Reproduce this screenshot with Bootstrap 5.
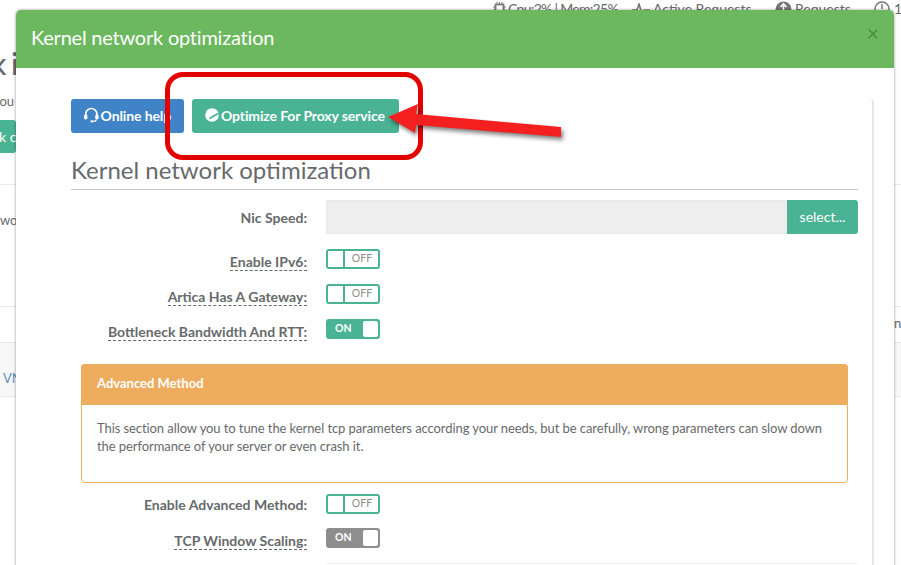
<!DOCTYPE html>
<html lang="en">
<head>
<meta charset="utf-8">
<title>Kernel network optimization</title>
<link rel="stylesheet" href="https://cdn.jsdelivr.net/npm/bootstrap@5.3.0/dist/css/bootstrap.min.css">
<style>
html,body{height:100%;overflow:hidden;background:#fff}
body{font-family:Lato,"Open Sans",sans-serif;font-size:14px;color:#676a6c}
.scene{position:relative;width:901px;height:565px;overflow:hidden}
.statusbar{height:16px;margin-top:1px;padding-left:493px;white-space:nowrap;color:#676a6c;line-height:20px;margin-bottom:-1px}
.statusbar svg{flex:none}
.statusbar>div{flex:none}
.stat1{width:139px;gap:2px}.stat2{width:143px;gap:3px}.stat3{width:99px;gap:3px}
.stat1 span{letter-spacing:-.7px}
.backh{font-size:30px;line-height:36px;margin:29px 0 0 -9px;font-weight:500;color:#676a6c;word-spacing:-3px}
.backp{margin:12px 0 0 -5px;font-size:13px;line-height:16px}
.backb{margin-top:11px;width:16px;height:33px;background:#4ab394;color:#fff;border-radius:0 3px 3px 0;line-height:33px;white-space:nowrap;overflow:hidden;text-indent:-1px}
.backrow{border-top:1px solid #e7eaec;font-size:13px;white-space:nowrap}
.r1{margin-top:31px;height:122px;padding-top:26px}
.r2{height:36px;padding-left:894px;padding-top:7px}
.r3{height:55px;background:#f8f8f8;padding:26px 0 0 3px;border-bottom:1px solid #e7eaec;color:#5b8fc0}
.wnd{position:absolute;left:16px;top:10px;width:878px;height:600px;background:#fff;border-radius:5px 5px 0 0;box-shadow:0 0 3px rgba(0,0,0,.45)}
.wnd-h{height:58px;background:#6cb85f;color:#fff;border-radius:5px 5px 0 0;padding:0 15px}
.wnd-t{font-size:20px;font-weight:400;margin:-4px 0 0;letter-spacing:-.22px}
.wnd-x{font-size:21px;line-height:1;color:#4f8a45;margin-top:-13px;border:0;background:none;padding:0}
.inner{margin:31px 0 0 55px;width:803px;padding-right:14px;border-right:2px solid #e7e7e7;border-top-right-radius:4px;height:520px}
.tbtn{height:34px;border:0;color:#fff;font-size:14px;font-weight:700;letter-spacing:-.12px;border-radius:3px;padding:0 13px 2px;display:flex;align-items:center;gap:2px;white-space:nowrap}
.tb-blue{background:#4083c6;width:113px}
.tb-teal{background:#4ab394;width:207px}
.sech{font-size:24px;font-weight:400;line-height:29px;color:#676a6c;margin:22px 0 0;padding-bottom:5px;border-bottom:1px solid #c9c9c9}
.frow{display:flex;align-items:flex-start;gap:19px;height:20px}
.flab{width:236px;text-align:right;font-weight:700;line-height:17px;flex:none;font-size:14px}
.flab span.dot{border-bottom:1px dashed #676a6c}
.nic{margin-top:10px;height:34px}
.nic .flab{padding-top:9px}
.nicv{flex:1;height:34px;background:#eee;border:1px solid #e9e9e9}
.nicb{width:71px;height:34px;background:#4ab394;color:#fff;border:0;border-radius:0 3px 3px 0;padding:0 0 2px;font-size:14px}
.sw{width:54px;height:20px;border:2px solid #4ab394;border-radius:3px;flex:none;display:flex;font-size:10.5px;font-weight:700;line-height:14px;background:#fff;overflow:hidden}
.sw-off .knob{width:15px;border-right:2px solid #4ab394;flex:none;height:16px;box-sizing:content-box}
.sw-off .lbl{flex:1;text-align:center;color:#8c8c8c;padding-left:1px;font-weight:400;letter-spacing:.1px}
.sw-on{background:#4ab394}
.sw-on .lbl{flex:1;color:#fff;padding-left:7px}
.sw-on .knob{width:15px;height:16px;background:#fff;border-radius:2px;flex:none}
.sw-gray{border-color:#8e8e8e;background:#8e8e8e}
.rowa{margin-top:15px}
.rowa .flab{padding-top:4px}
.rowb .flab{padding-top:2px}
.rowc{margin-top:14px}
.rowc .flab{padding-top:4px}
.orange{margin:25px 10px 0 10px;border:1px solid #eeac5f;border-radius:4px;height:119px}
.orange-h{height:41px;background:#eeac5f;color:#fff;font-weight:700;font-size:13px;padding:0 16px 1px;display:flex;align-items:center;margin:-1px -1px 0;border-radius:4px 4px 0 0}
.orange-b{padding:14px 15px;font-size:13px;line-height:18px;letter-spacing:-.08px}
.rowb{margin-top:11px}
.next{margin:15px 0 0 255px;height:30px;border:1px solid #efefef;border-radius:3px}
.mark-box{position:absolute;left:165px;top:72px;width:258px;height:88px;border:5px solid #e30000;border-radius:18px}
.mark-arrow{position:absolute;left:380px;top:96px;filter:drop-shadow(2px 3px 2px rgba(0,0,0,.5))}
</style>
</head>
<body>
<div class="scene">
  <div class="statusbar d-flex align-items-center">
    <div class="stat1 d-flex align-items-center"><svg width="13" height="14" viewBox="0 0 13 14"><rect x="2.500" y="2.500" width="8" height="9" fill="none" stroke="#777" stroke-width="1.800"/><path d="M4 0v2M6.500 0v2M9 0v2M0 5h2M0 8h2M11 5h2M11 8h2" stroke="#777"/></svg><span>Cpu:2% | Mem:25%</span></div>
    <div class="stat2 d-flex align-items-center"><svg width="18" height="12" viewBox="0 0 18 12"><path d="M0 7h5l2-6 3 10 2-4h6" fill="none" stroke="#777" stroke-width="1.600"/></svg><span>Active Requests</span></div>
    <div class="stat3 d-flex align-items-center"><svg width="17" height="17" viewBox="0 0 17 17"><circle cx="8.500" cy="8.500" r="8" fill="#777"/><path d="M8.500 3v6M5.500 6l3-3 3 3" fill="none" stroke="#fff" stroke-width="1.600"/></svg><span>Requests</span></div>
    <div class="d-flex align-items-center gap-1"><svg width="16" height="16" viewBox="0 0 16 16"><circle cx="8" cy="8" r="7" fill="none" stroke="#777" stroke-width="1.500"/><path d="M8 3v5" stroke="#777" stroke-width="1.500"/></svg><span>14</span></div>
  </div>
  <div class="backh">k i</div>
  <div class="backp">rou</div>
  <div class="backb">k c</div>
  <div class="backrow r1">wor</div>
  <div class="backrow r2">n</div>
  <div class="backrow r3">VN</div>

  <div class="wnd">
    <div class="wnd-h d-flex align-items-center justify-content-between">
      <h4 class="wnd-t">Kernel network optimization</h4>
      <button class="wnd-x" type="button">×</button>
    </div>
    <div class="inner">
      <div class="d-flex gap-2">
        <button class="tbtn tb-blue" type="button"><svg width="15" height="16" viewBox="0 0 15 16"><path d="M1.800 9V7a5.700 5.700 0 0 1 11.400 0v2" fill="none" stroke="#fff" stroke-width="1.600"/><rect x="0" y="7.500" width="3.500" height="5" rx="1.500" fill="#fff"/><rect x="11.500" y="7.500" width="3.500" height="5" rx="1.500" fill="#fff"/><path d="M12.500 12.500c0 1.500-2 2-4 2" fill="none" stroke="#fff" stroke-width="1.300"/><circle cx="8" cy="14.500" r="1.200" fill="#fff"/></svg>Online help</button>
        <button class="tbtn tb-teal" type="button"><svg width="14" height="14" viewBox="0 0 14 14"><circle cx="7" cy="7" r="6.800" fill="#fff"/><path d="M4.500 10.500 13 5.500" stroke="#4ab394" stroke-width="1.800"/></svg>Optimize For Proxy service</button>
      </div>
      <h3 class="sech">Kernel network optimization</h3>
      <div class="frow nic">
        <div class="flab">Nic Speed:</div>
        <div class="d-flex flex-grow-1"><div class="nicv"></div><button class="nicb" type="button">select...</button></div>
      </div>
      <div class="frow rowa">
        <div class="flab"><span class="dot">Enable IPv6:</span></div>
        <div class="sw sw-off"><div class="knob"></div><div class="lbl">OFF</div></div>
      </div>
      <div class="frow rowa">
        <div class="flab"><span class="dot">Artica Has A Gateway:</span></div>
        <div class="sw sw-off"><div class="knob"></div><div class="lbl">OFF</div></div>
      </div>
      <div class="frow rowa">
        <div class="flab"><span class="dot">Bottleneck Bandwidth And RTT:</span></div>
        <div class="sw sw-on"><div class="lbl">ON</div><div class="knob"></div></div>
      </div>
      <div class="orange">
        <div class="orange-h">Advanced Method</div>
        <div class="orange-b">This section allow you to tune the kernel tcp parameters according your needs, but be carefully, wrong parameters can slow down the performance of your server or even crash it.</div>
      </div>
      <div class="frow rowb">
        <div class="flab">Enable Advanced Method:</div>
        <div class="sw sw-off"><div class="knob"></div><div class="lbl">OFF</div></div>
      </div>
      <div class="frow rowc">
        <div class="flab"><span class="dot">TCP Window Scaling:</span></div>
        <div class="sw sw-on sw-gray"><div class="lbl">ON</div><div class="knob"></div></div>
      </div>
      <div class="next"></div>
    </div>
  </div>

  <div class="mark-box"></div>
  <svg class="mark-arrow" width="190" height="50" viewBox="380 96 190 50"><polygon points="388,117 418,104 416,114 561,127 561,137 416,125 415,133" fill="#f42020"/></svg>
</div>
<script src="https://cdn.jsdelivr.net/npm/bootstrap@5.3.0/dist/js/bootstrap.bundle.min.js"></script>
</body>
</html>
